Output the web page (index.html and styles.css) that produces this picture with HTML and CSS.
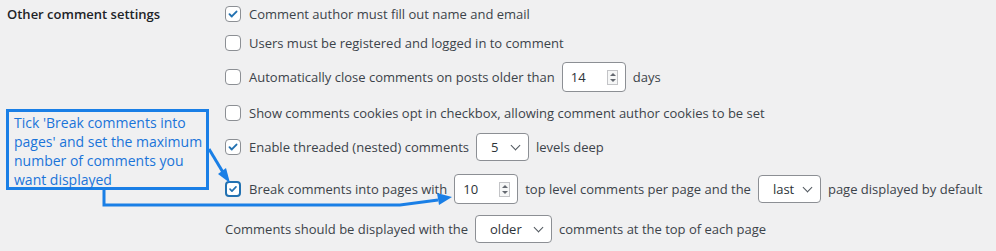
FILE: index.html
```html
<!DOCTYPE html>
<html>
<head>
  <title>Discussion Settings</title>
  <link rel="stylesheet" href="styles.css">
</head>
<body>

<div class="setting">
  <div class="setting-label">Other comment settings</div>

  <div class="setting-options">
    <div class="row row-first">
      <span class="cb checked"><svg viewBox="0 0 16 16"><path d="M4 8.2l2.6 2.6L12 5.2"/></svg></span>
      Comment author must fill out name and email
    </div>
    <div class="row">
      <span class="cb"></span>
      Users must be registered and logged in to comment
    </div>
    <div class="row row-input">
      <span class="cb"></span>
      Automatically close comments on posts older than
      <span class="field num">14<span class="spin"><i class="up"></i><i class="down"></i></span></span>
      days
    </div>
    <div class="row row-mid">
      <span class="cb"></span>
      Show comments cookies opt in checkbox, allowing comment author cookies to be set
    </div>
    <div class="row row-mid">
      <span class="cb checked"><svg viewBox="0 0 16 16"><path d="M4 8.2l2.6 2.6L12 5.2"/></svg></span>
      Enable threaded (nested) comments
      <span class="field select sel-5">5<span class="chev"></span></span>
      levels deep
    </div>
    <div class="row row-tall">
      <span class="cb checked focus"><svg viewBox="0 0 16 16"><path d="M4 8.2l2.6 2.6L12 5.2"/></svg></span>
      Break comments into pages with
      <span class="field num">10<span class="spin"><i class="up"></i><i class="down"></i></span></span>
      top level comments per page and the
      <span class="field select sel-last">last<span class="chev"></span></span>
      page displayed by default
    </div>
    <div class="row row-plain">
      Comments should be displayed with the
      <span class="field select sel-older">older<span class="chev"></span></span>
      comments at the top of each page
    </div>
  </div>
</div>

<div class="callout">
  Tick 'Break comments into<br>
  pages' and set the maximum<br>
  number of comments you<br>
  want displayed
</div>

<svg class="arrows" width="996" height="251" viewBox="0 0 996 251">
  <path class="line" d="M209 149 L224 174"/>
  <path class="head" d="M230 183 L218 174 L226 168 Z"/>
  <path class="line" d="M104 190 L104 205 L400 205 L438 200"/>
  <path class="head" d="M452 197 L437 193 L439 205 Z"/>
</svg>

</body>
</html>
```

FILE: styles.css
```css
body {
  margin: 0;
  background-color: #f0f0f1;
  font-family: "Open Sans", "Noto Sans", sans-serif;
  font-size: 13px;
  color: #3c434a;
}

.setting {
  display: flex;
}

.setting-label {
  width: 225px;
  padding: 5px 0 0 7px;
  font-weight: 600;
  color: #1d2327;
  box-sizing: border-box;
}

.setting-options {
  display: flex;
  flex-direction: column;
}

.row {
  display: flex;
  align-items: center;
  height: 30px;
  white-space: nowrap;
}

.row-first {
  height: 28px;
}

.row-input {
  height: 38px;
}

.row-mid {
  height: 34px;
}

.row-tall {
  height: 50px;
}

.cb {
  width: 16px;
  height: 16px;
  margin-right: 8px;
  border: 1px solid #8c8f94;
  border-radius: 4px;
  background-color: white;
  box-sizing: border-box;
  flex-shrink: 0;
}

.cb svg {
  display: block;
  width: 14px;
  height: 14px;
}

.cb path {
  fill: none;
  stroke: #2271b1;
  stroke-width: 2.2;
  stroke-linecap: round;
  stroke-linejoin: round;
}

.cb.focus {
  border: 2px solid #2271b1;
}

.cb.focus svg {
  width: 12px;
  height: 12px;
}

.field {
  position: relative;
  display: flex;
  align-items: center;
  height: 30px;
  margin: 0 7px;
  padding: 0 8px;
  border: 1px solid #8c8f94;
  border-radius: 4px;
  background-color: white;
  color: #2c3338;
  box-sizing: border-box;
}

.num {
  width: 64px;
}

.select {
  height: 28px;
  padding-left: 14px;
}

.sel-5 {
  width: 53px;
}

.sel-last {
  width: 63px;
}

.sel-older {
  width: 77px;
}

.spin {
  position: absolute;
  right: 7px;
  top: 7px;
  width: 11px;
  height: 15px;
  border: 1px solid #c3c4c7;
  background-color: #f6f7f7;
  box-sizing: border-box;
}

.spin i {
  position: absolute;
  left: 2px;
  width: 0;
  height: 0;
  border-left: 3px solid transparent;
  border-right: 3px solid transparent;
}

.spin .up {
  top: 2px;
  border-bottom: 3px solid #646970;
}

.spin .down {
  bottom: 2px;
  border-top: 3px solid #646970;
}

.chev {
  position: absolute;
  right: 9px;
  top: 8px;
  width: 6px;
  height: 6px;
  border-right: 1.5px solid #50575e;
  border-bottom: 1.5px solid #50575e;
  transform: rotate(45deg);
}

.callout {
  position: absolute;
  left: 6px;
  top: 109px;
  width: 203px;
  height: 81px;
  padding: 1px 5px;
  border: 3px solid #1a7fe6;
  background-color: #f0f0f1;
  color: #1a74d9;
  font-size: 14px;
  line-height: 19px;
  white-space: nowrap;
  box-sizing: border-box;
}

.arrows {
  position: absolute;
  left: 0;
  top: 0;
  pointer-events: none;
}

.arrows .line {
  fill: none;
  stroke: #1a7fe6;
  stroke-width: 3;
}

.arrows .head {
  fill: #1a7fe6;
}
```
